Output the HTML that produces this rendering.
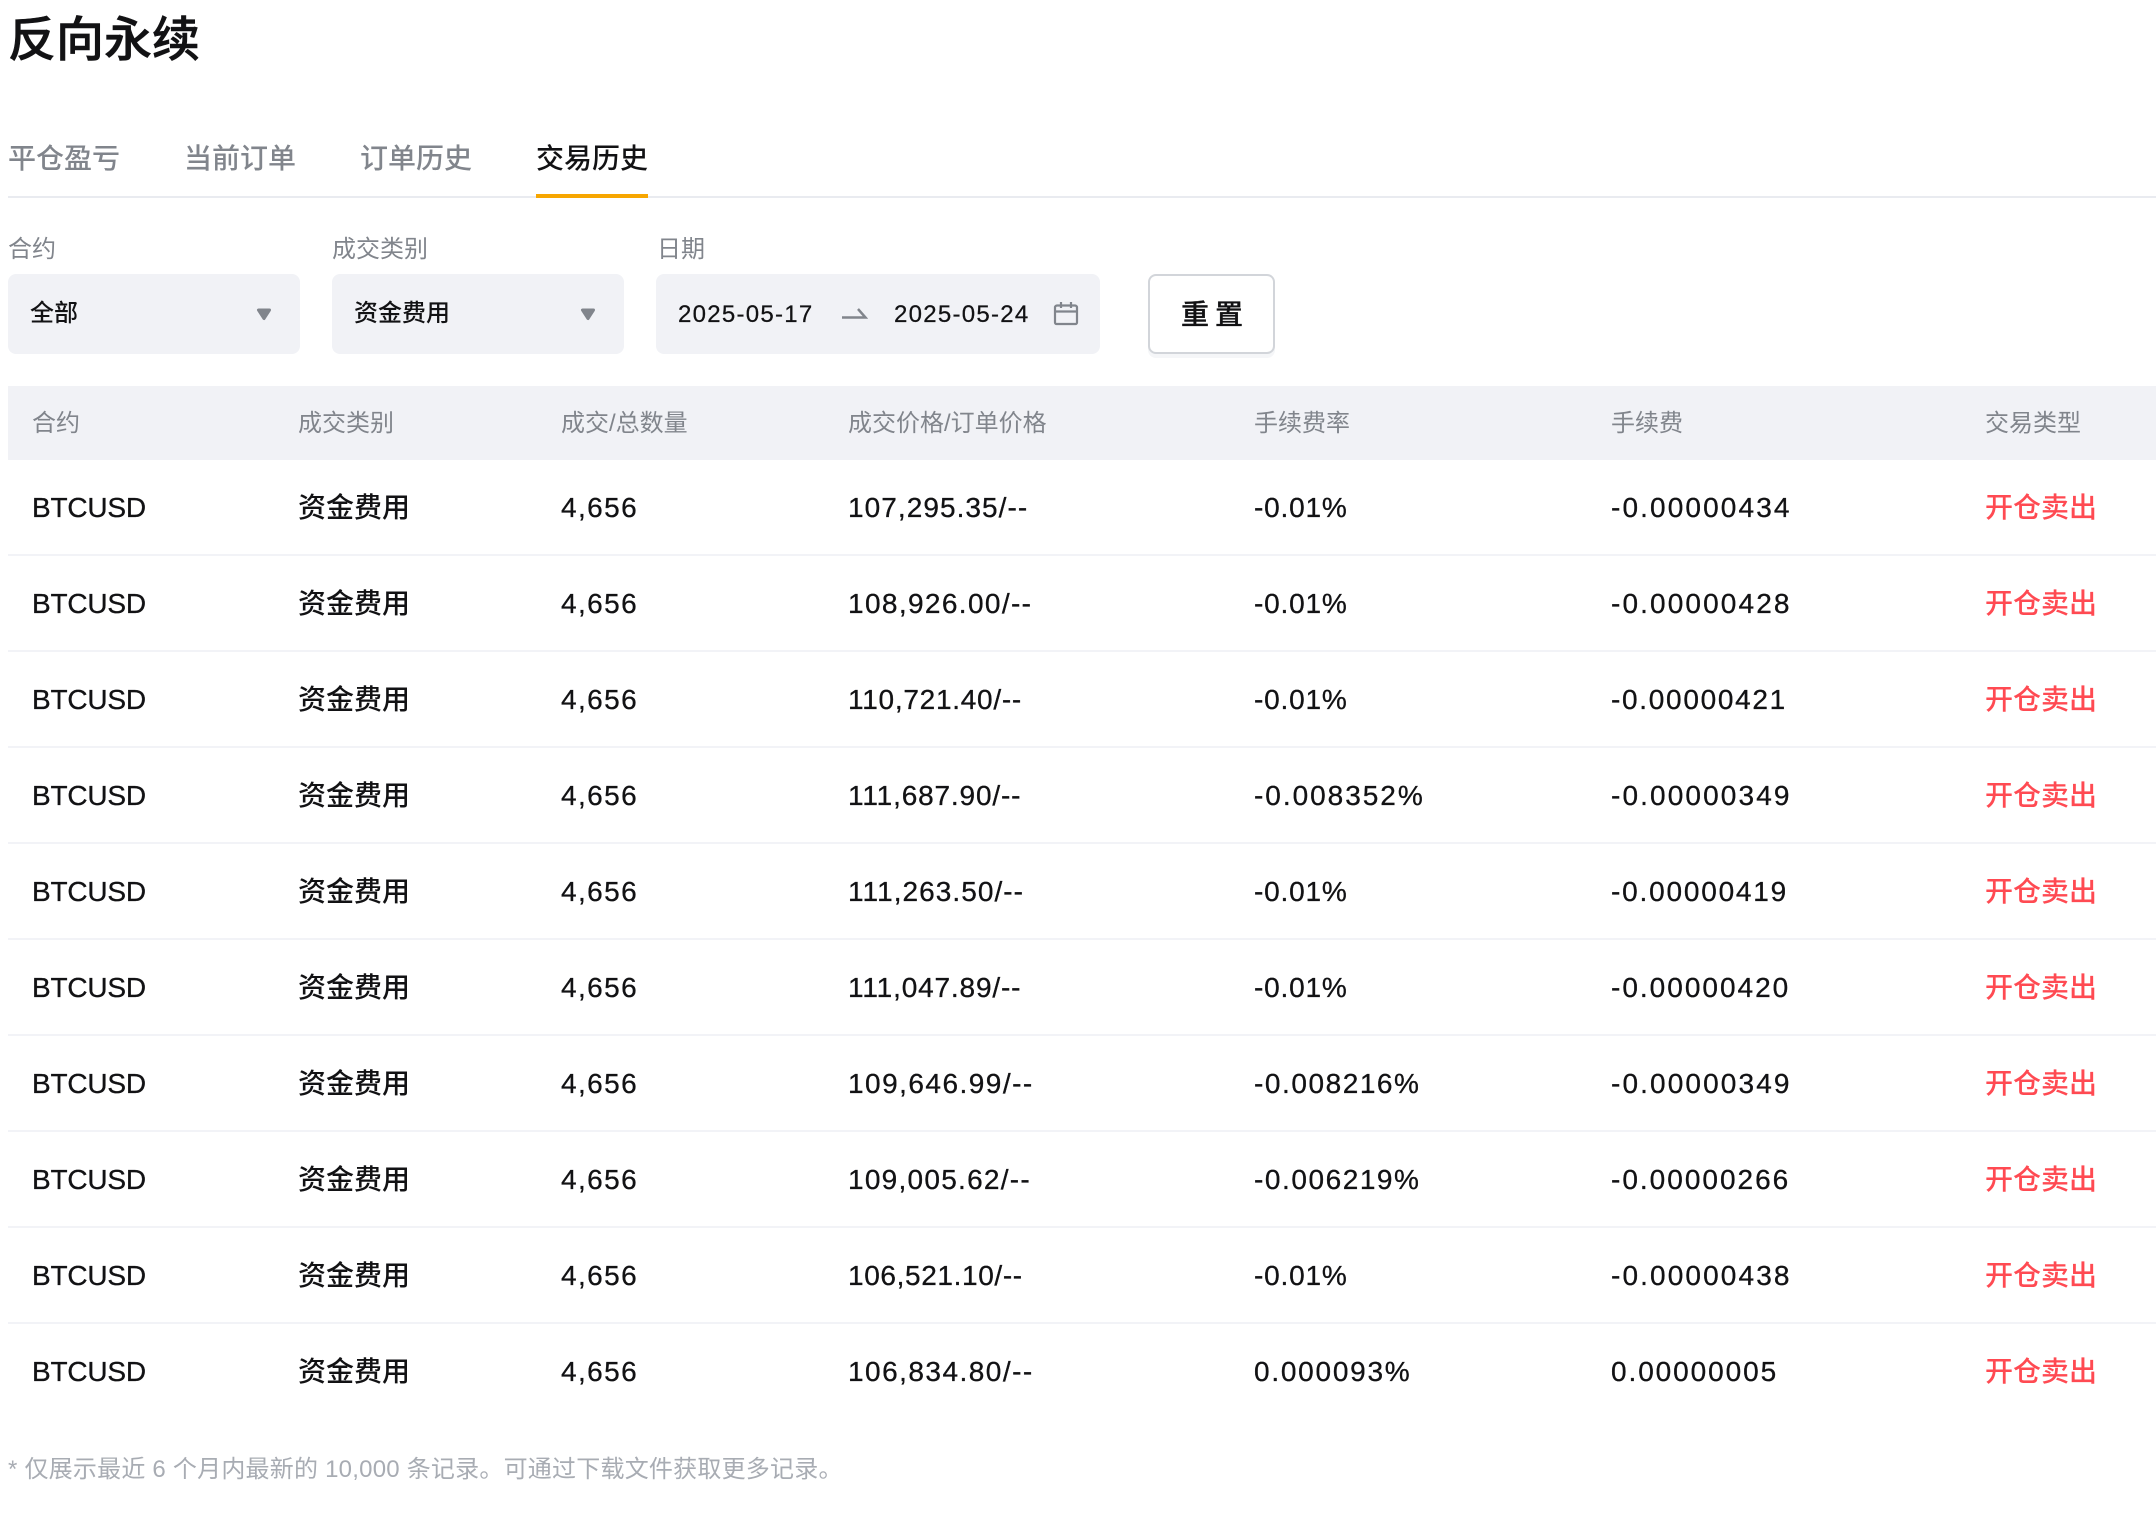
<!DOCTYPE html>
<html lang="zh-CN">
<head>
<meta charset="utf-8">
<title>反向永续</title>
<style>
html,body{margin:0;padding:0;background:#fff;}
body{position:relative;width:2156px;height:1532px;overflow:hidden;font-family:"Liberation Sans","Noto Sans CJK SC",sans-serif;color:#121214;}
.a{position:absolute;white-space:nowrap;}
.title{left:8px;top:11px;font-size:48px;line-height:60px;font-weight:500;letter-spacing:0;-webkit-text-stroke:.6px #121214;}
.tab{top:139px;font-size:28px;line-height:40px;color:#81858c;font-weight:500;}
.label{top:237px;font-size:24px;line-height:26px;color:#81858c;}
.box{top:274px;height:80px;background:#f1f2f6;border-radius:8px;}
.val{top:299px;font-size:24px;line-height:30px;font-weight:500;}
.date{letter-spacing:1.27px;-webkit-text-stroke:.25px #121214;}
.thead{left:8px;top:386px;width:2148px;height:74px;background:#f1f2f6;}
.th{top:410px;font-size:24px;line-height:28px;color:#81858c;}
.row{position:absolute;left:8px;width:2148px;height:94px;border-bottom:2px solid #f2f3f7;}
.row span{position:absolute;top:30px;font-size:28px;line-height:36px;white-space:nowrap;font-weight:500;}
.c1,.c3,.c4,.c5,.c6{-webkit-text-stroke:.3px #121214;}
.c1{left:24px;letter-spacing:-.2px;}
.c2{left:290px;}
.c3{left:553px;letter-spacing:1.4px;}
.c4{left:840px;letter-spacing:1.05px;}
.c5{left:1246px;letter-spacing:1.7px;}
.c5.s{letter-spacing:.8px;}
.c6{left:1603px;letter-spacing:2.1px;}
.c7{left:1977px;color:#ff4a52;}
.note{left:8px;top:1456px;font-size:24px;line-height:28px;color:#a8acb3;letter-spacing:.22px;}
</style>
</head>
<body>
<div class="a title">反向永续</div>

<div class="a tab" style="left:8px">平仓盈亏</div>
<div class="a tab" style="left:184px">当前订单</div>
<div class="a tab" style="left:360px">订单历史</div>
<div class="a tab" style="left:536px;color:#121214">交易历史</div>
<div class="a" style="left:8px;top:196px;width:2148px;height:2px;background:#e9ebf0"></div>
<div class="a" style="left:536px;top:194px;width:112px;height:4px;background:#f7a600"></div>

<div class="a label" style="left:8px">合约</div>
<div class="a label" style="left:332px">成交类别</div>
<div class="a label" style="left:657px">日期</div>

<div class="a box" style="left:8px;width:292px"></div>
<div class="a val" style="left:30px">全部</div>
<svg class="a" style="left:256px;top:308px" width="16" height="13" viewBox="0 0 16 13"><path d="M2.500 2h11L8 10.500z" fill="#81858c" stroke="#81858c" stroke-width="3" stroke-linejoin="round"/></svg>

<div class="a box" style="left:332px;width:292px"></div>
<div class="a val" style="left:354px">资金费用</div>
<svg class="a" style="left:580px;top:308px" width="16" height="13" viewBox="0 0 16 13"><path d="M2.500 2h11L8 10.500z" fill="#81858c" stroke="#81858c" stroke-width="3" stroke-linejoin="round"/></svg>

<div class="a box" style="left:656px;width:444px"></div>
<div class="a val date" style="left:678px;top:300px">2025-05-17</div>
<svg class="a" style="left:840px;top:304px" width="28" height="18" viewBox="0 0 28 18"><path d="M2 13.500h23.500L18 5" fill="none" stroke="#81858c" stroke-width="2.500"/></svg>
<div class="a val date" style="left:894px;top:300px">2025-05-24</div>
<svg class="a" style="left:1052px;top:299px" width="28" height="28" viewBox="0 0 28 28"><path d="M5 6.500h18a2 2 0 0 1 2 2v15a1.500 1.500 0 0 1-1.500 1.500h-19A1.500 1.500 0 0 1 3 23.500v-15a2 2 0 0 1 2-2zM3 12.500h22M9 3v6M19 3v6" fill="none" stroke="#81858c" stroke-width="2.200"/></svg>

<div class="a" style="left:1148px;top:274px;width:123px;height:76px;border:2px solid #d2d5da;border-radius:8px;background:#fff;box-shadow:0 4px 0 #f5f6f8"></div>
<div class="a" style="left:1181px;top:297px;font-size:28px;line-height:36px;font-weight:500;letter-spacing:6px;-webkit-text-stroke:.3px #121214">重置</div>

<div class="a thead"></div>
<div class="a th" style="left:32px">合约</div>
<div class="a th" style="left:298px">成交类别</div>
<div class="a th" style="left:561px">成交/总数量</div>
<div class="a th" style="left:848px">成交价格/订单价格</div>
<div class="a th" style="left:1254px">手续费率</div>
<div class="a th" style="left:1611px">手续费</div>
<div class="a th" style="left:1985px">交易类型</div>

<div class="row" style="top:460px"><span class="c1">BTCUSD</span><span class="c2">资金费用</span><span class="c3">4,656</span><span class="c4" style="letter-spacing:1.05px">107,295.35/--</span><span class="c5 s">-0.01%</span><span class="c6" style="letter-spacing:2.12px">-0.00000434</span><span class="c7">开仓卖出</span></div>
<div class="row" style="top:556px"><span class="c1">BTCUSD</span><span class="c2">资金费用</span><span class="c3">4,656</span><span class="c4" style="letter-spacing:1.37px">108,926.00/--</span><span class="c5 s">-0.01%</span><span class="c6" style="letter-spacing:2.12px">-0.00000428</span><span class="c7">开仓卖出</span></div>
<div class="row" style="top:652px"><span class="c1">BTCUSD</span><span class="c2">资金费用</span><span class="c3">4,656</span><span class="c4" style="letter-spacing:.73px">110,721.40/--</span><span class="c5 s">-0.01%</span><span class="c6" style="letter-spacing:1.7px">-0.00000421</span><span class="c7">开仓卖出</span></div>
<div class="row" style="top:748px"><span class="c1">BTCUSD</span><span class="c2">资金费用</span><span class="c3">4,656</span><span class="c4" style="letter-spacing:.84px">111,687.90/--</span><span class="c5" style="letter-spacing:1.97px">-0.008352%</span><span class="c6" style="letter-spacing:2.12px">-0.00000349</span><span class="c7">开仓卖出</span></div>
<div class="row" style="top:844px"><span class="c1">BTCUSD</span><span class="c2">资金费用</span><span class="c3">4,656</span><span class="c4" style="letter-spacing:1.05px">111,263.50/--</span><span class="c5 s">-0.01%</span><span class="c6" style="letter-spacing:1.8px">-0.00000419</span><span class="c7">开仓卖出</span></div>
<div class="row" style="top:940px"><span class="c1">BTCUSD</span><span class="c2">资金费用</span><span class="c3">4,656</span><span class="c4" style="letter-spacing:.84px">111,047.89/--</span><span class="c5 s">-0.01%</span><span class="c6" style="letter-spacing:2px">-0.00000420</span><span class="c7">开仓卖出</span></div>
<div class="row" style="top:1036px"><span class="c1">BTCUSD</span><span class="c2">资金费用</span><span class="c3">4,656</span><span class="c4" style="letter-spacing:1.47px">109,646.99/--</span><span class="c5" style="letter-spacing:1.55px">-0.008216%</span><span class="c6" style="letter-spacing:2.12px">-0.00000349</span><span class="c7">开仓卖出</span></div>
<div class="row" style="top:1132px"><span class="c1">BTCUSD</span><span class="c2">资金费用</span><span class="c3">4,656</span><span class="c4" style="letter-spacing:1.26px">109,005.62/--</span><span class="c5" style="letter-spacing:1.55px">-0.006219%</span><span class="c6" style="letter-spacing:2px">-0.00000266</span><span class="c7">开仓卖出</span></div>
<div class="row" style="top:1228px"><span class="c1">BTCUSD</span><span class="c2">资金费用</span><span class="c3">4,656</span><span class="c4" style="letter-spacing:.63px">106,521.10/--</span><span class="c5 s">-0.01%</span><span class="c6" style="letter-spacing:2.12px">-0.00000438</span><span class="c7">开仓卖出</span></div>
<div class="row" style="top:1324px;border-bottom:0"><span class="c1">BTCUSD</span><span class="c2">资金费用</span><span class="c3">4,656</span><span class="c4" style="letter-spacing:1.47px">106,834.80/--</span><span class="c5" style="letter-spacing:1.75px">0.000093%</span><span class="c6" style="letter-spacing:1.92px">0.00000005</span><span class="c7">开仓卖出</span></div>

<div class="a note">* 仅展示最近 6 个月内最新的 10,000 条记录。可通过下载文件获取更多记录。</div>
</body>
</html>
